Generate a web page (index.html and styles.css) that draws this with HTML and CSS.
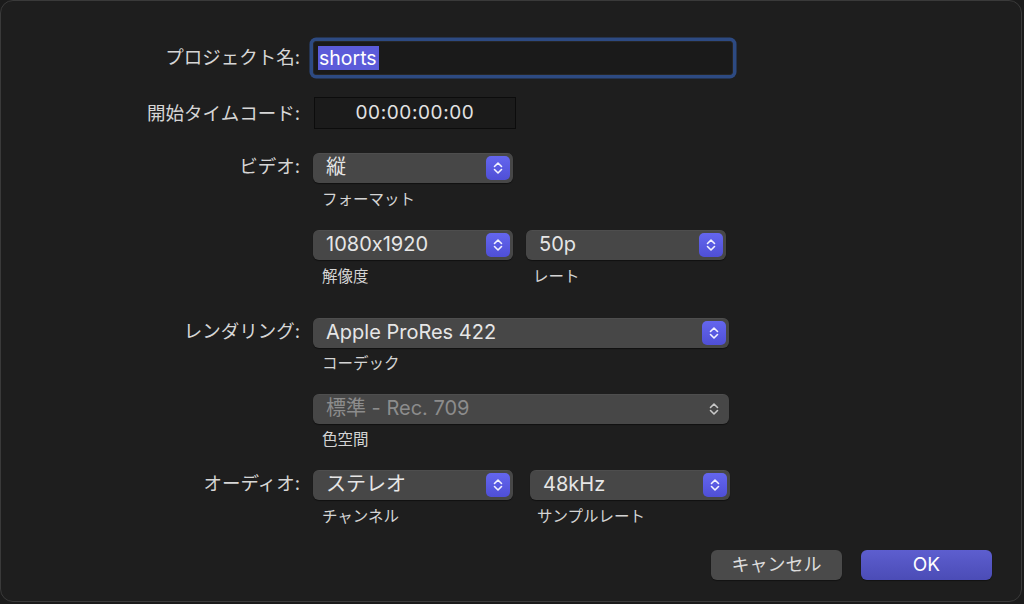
FILE: index.html
```html
<!DOCTYPE html>
<html lang="ja">
<head>
<meta charset="utf-8">
<link rel="stylesheet" href="styles.css">
</head>
<body>
<div class="window">
  <div class="row row-name">
    <div class="label">プロジェクト名:</div>
    <div class="field"><span class="sel">shorts</span></div>
  </div>
  <div class="row row-tc">
    <div class="label">開始タイムコード:</div>
    <div class="tc">00:00:00:00</div>
  </div>
  <div class="row row-video">
    <div class="label">ビデオ:</div>
    <div class="content">
      <div class="popup w200"><span class="ptext">縦</span>
        <span class="stepper"><svg viewBox="0 0 24 24"><path d="M8.5 10.5 L12 7 L15.5 10.5 M8.5 13.5 L12 17 L15.5 13.5"/></svg></span></div>
      <div class="sub">フォーマット</div>
      <div class="pair pair-video">
        <div class="col">
          <div class="popup w200"><span class="ptext">1080x1920</span>
            <span class="stepper"><svg viewBox="0 0 24 24"><path d="M8.5 10.5 L12 7 L15.5 10.5 M8.5 13.5 L12 17 L15.5 13.5"/></svg></span></div>
          <div class="sub">解像度</div>
        </div>
        <div class="col">
          <div class="popup w200"><span class="ptext">50p</span>
            <span class="stepper"><svg viewBox="0 0 24 24"><path d="M8.5 10.5 L12 7 L15.5 10.5 M8.5 13.5 L12 17 L15.5 13.5"/></svg></span></div>
          <div class="sub sub-r">レート</div>
        </div>
      </div>
    </div>
  </div>
  <div class="row row-render">
    <div class="label">レンダリング:</div>
    <div class="content">
      <div class="popup w416"><span class="ptext">Apple ProRes 422</span>
        <span class="stepper"><svg viewBox="0 0 24 24"><path d="M8.5 10.5 L12 7 L15.5 10.5 M8.5 13.5 L12 17 L15.5 13.5"/></svg></span></div>
      <div class="sub sub-tight">コーデック</div>
      <div class="popup w416 disabled"><span class="ptext">標準 - Rec. 709</span>
        <span class="stepper plain"><svg viewBox="0 0 24 24"><path d="M8.5 10.5 L12 7 L15.5 10.5 M8.5 13.5 L12 17 L15.5 13.5"/></svg></span></div>
      <div class="sub sub-tight">色空間</div>
    </div>
  </div>
  <div class="row row-audio">
    <div class="label">オーディオ:</div>
    <div class="content">
      <div class="pair pair-audio">
        <div class="col">
          <div class="popup w200"><span class="ptext">ステレオ</span>
            <span class="stepper"><svg viewBox="0 0 24 24"><path d="M8.5 10.5 L12 7 L15.5 10.5 M8.5 13.5 L12 17 L15.5 13.5"/></svg></span></div>
          <div class="sub">チャンネル</div>
        </div>
        <div class="col">
          <div class="popup w200"><span class="ptext">48kHz</span>
            <span class="stepper"><svg viewBox="0 0 24 24"><path d="M8.5 10.5 L12 7 L15.5 10.5 M8.5 13.5 L12 17 L15.5 13.5"/></svg></span></div>
          <div class="sub sub-r">サンプルレート</div>
        </div>
      </div>
    </div>
  </div>
  <div class="buttons">
    <div class="btn cancel">キャンセル</div>
    <div class="btn ok">OK</div>
  </div>
</div>
</body>
</html>
```

FILE: styles.css
```css
html, body {
  margin: 0;
  padding: 0;
  background: #1b1b1b;
}
body {
  width: 1024px;
  height: 604px;
  overflow: hidden;
  font-family: Inter, "Noto Sans CJK JP", sans-serif;
  font-feature-settings: "calt" 0;
  color: #dedede;
}
.window {
  box-sizing: border-box;
  width: 1022px;
  height: 602px;
  border: 1px solid #3a3a3a;
  border-radius: 13px;
  background: #1e1e1e;
  display: flex;
  flex-direction: column;
}
.row {
  display: grid;
  grid-template-columns: 299px auto;
  column-gap: 13px;
  align-items: start;
}
.label {
  text-align: right;
  font-size: 18.5px;
  line-height: 26px;
  color: #d6d6d6;
  white-space: nowrap;
}
.row-name { margin-top: 40px; }
.row-name .label { line-height: 32px; }
.field {
  box-sizing: border-box;
  width: 420px;
  height: 34px;
  background: #1a1a1a;
  border: 1px solid #262626;
  box-shadow: 0 0 0 3.5px #2d4a82;
  border-radius: 3px;
  padding: 4px 0 0 4px;
}
.sel {
  display: inline-block;
  background: #5b5bd9;
  color: #ffffff;
  font-size: 19.5px;
  line-height: 24px;
  padding: 0 2px 0 1px;
}
.row-tc { margin-top: 22px; }
.row-tc .label { line-height: 32px; }
.tc {
  box-sizing: border-box;
  width: 202px;
  height: 32px;
  margin-left: 1px;
  background: #1b1b1b;
  border: 1px solid #0c0c0c;
  text-align: center;
  font-size: 19px;
  line-height: 30px;
  color: #e2e2e2;
  letter-spacing: 0.6px;
}
.row-video { margin-top: 24px; }
.row-render { margin-top: 31px; }
.row-audio { margin-top: 20px; }
.content {
  display: flex;
  flex-direction: column;
  align-items: flex-start;
}
.popup {
  box-sizing: border-box;
  height: 30px;
  border-radius: 6px;
  background: #474747;
  box-shadow: 0 1px 1px rgba(0,0,0,0.45), inset 0 0.5px 0 rgba(255,255,255,0.08);
  display: flex;
  align-items: center;
  justify-content: space-between;
  padding: 0 3px 0 13px;
}
.w200 { width: 200px; }
.w416 { width: 416px; }
.ptext {
  font-size: 20px;
  line-height: 24px;
  margin-top: -3px;
  color: #e6e6e6;
  white-space: nowrap;
}
.stepper {
  width: 24px;
  height: 24px;
  border-radius: 5px;
  background: linear-gradient(#6466ee, #4f4fd6);
  display: flex;
  align-items: center;
  justify-content: center;
}
.stepper svg {
  width: 24px;
  height: 24px;
  fill: none;
  stroke: #f2f2ff;
  stroke-width: 1.6;
  stroke-linecap: round;
  stroke-linejoin: round;
}
.stepper.plain { background: none; }
.stepper.plain svg { stroke: #c8c8c8; }
.disabled .ptext { color: #8c8c8c; }
.sub {
  font-size: 15.5px;
  line-height: 20px;
  color: #d4d4d4;
  margin: 7px 0 0 9px;
  white-space: nowrap;
}
.sub-tight { margin-top: 6px; }
.sub-r { margin-left: 7px; }
.pair {
  display: flex;
}
.pair-video { margin-top: 20px; gap: 13px; }
.pair-audio { gap: 17px; }
.row-render .popup.disabled { margin-top: 20px; }
.buttons {
  display: flex;
  justify-content: flex-end;
  gap: 19px;
  margin-top: 23px;
  padding-right: 29px;
}
.btn {
  box-sizing: border-box;
  width: 131px;
  height: 30px;
  border-radius: 6px;
  font-size: 18px;
  line-height: 30px;
  text-align: center;
}
.ok { font-size: 19px; }
.cancel {
  background: #4a4a4a;
  color: #dcdcdc;
  box-shadow: 0 1px 1px rgba(0,0,0,0.4);
}
.ok {
  background: linear-gradient(#5d5ecf, #4b4cb6);
  color: #ffffff;
  box-shadow: 0 1px 1px rgba(0,0,0,0.4);
}
```
